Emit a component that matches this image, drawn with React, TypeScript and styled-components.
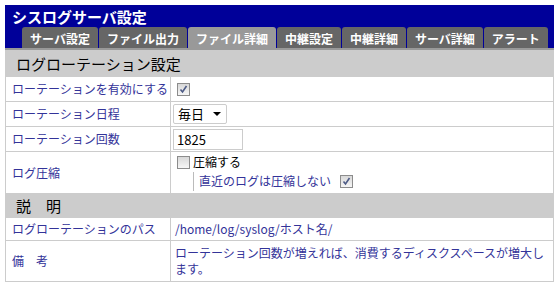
import React from 'react';
import styled, { createGlobalStyle } from 'styled-components';

const GlobalStyle = createGlobalStyle`
  body {
    margin: 0;
    background: #fff;
    font-family: "Noto Sans CJK JP", "Noto Sans", sans-serif;
  }
`;

const tabs = ['サーバ設定', 'ファイル出力', 'ファイル詳細', '中継設定', '中継詳細', 'サーバ詳細', 'アラート'];
const activeTab = 'ファイル詳細';

const Page = styled.div`
  padding: 5px;
  width: 549px;
`;

const Header = styled.header`
  background: #000099;
  border-bottom: 2px solid #999;
  padding-top: 2px;
`;

const Title = styled.h1`
  margin: 0;
  padding-left: 7px;
  font-size: 15px;
  font-weight: bold;
  line-height: 19px;
  color: #fff;
`;

const TabBar = styled.nav`
  display: flex;
  gap: 1px;
  margin-top: 1px;
  padding-left: 17px;
`;

const Tab = styled.div<{ $active?: boolean }>`
  height: 21px;
  padding: 0 8px;
  border-radius: 3px 3px 0 0;
  background: ${(p) => (p.$active ? '#999' : '#666')};
  color: #fff;
  font-size: 12px;
  font-weight: bold;
  line-height: 23px;
  white-space: nowrap;
`;

const Table = styled.table`
  width: 549px;
  border-collapse: collapse;
  table-layout: fixed;
`;

const SectionHead = styled.th<{ $h: number }>`
  height: ${(p) => p.$h}px;
  padding: 0 0 0 10px;
  background: #ccc;
  border: 1px solid #ccc;
  color: #000;
  font-size: 15px;
  font-weight: normal;
  line-height: 18px;
  text-align: left;
  letter-spacing: 0;
`;

const Label = styled.td<{ $h: number }>`
  height: ${(p) => p.$h}px;
  padding: 0 6px;
  border: 1px solid #ccc;
  color: #333399;
  font-size: 12px;
  line-height: 16px;
  vertical-align: middle;
  white-space: nowrap;
`;

const Value = styled.td`
  padding: 0 4px;
  border: 1px solid #ccc;
  color: #333399;
  font-size: 12px;
  line-height: 16px;
  vertical-align: middle;
`;

const CheckBox = styled.span`
  display: inline-flex;
  align-items: center;
  justify-content: center;
  box-sizing: border-box;
  width: 13px;
  height: 13px;
  border: 1px solid #8c8c8c;
  background: linear-gradient(#d8d8d8, #f6f6f6);
  vertical-align: middle;
`;

const Check = ({ checked }: { checked?: boolean }) => (
  <CheckBox>
    {checked && (
      <svg width="9" height="9" viewBox="0 0 9 9">
        <path d="M1.5 4.5 L3.5 7 L7.5 1" fill="none" stroke="#4d5b86" strokeWidth="1.6" />
      </svg>
    )}
  </CheckBox>
);

const CheckLine = styled.div`
  display: flex;
  align-items: center;
  gap: 3px;
  margin-left: 2px;
  color: #000;
`;

const SubOption = styled.div`
  display: flex;
  align-items: center;
  gap: 9px;
  margin: 2px 0 0 18px;
  padding: 1px 0 2px 5px;
  border-left: 1px solid #bbb;
`;

const Select = styled.div`
  display: flex;
  align-items: center;
  justify-content: space-between;
  box-sizing: border-box;
  width: 54px;
  height: 20px;
  margin-left: -2px;
  padding: 0 5px 0 4px;
  border: 1px solid #ccc;
  border-radius: 2px;
  color: #000;
  font-size: 13px;
`;

const Caret = styled.span`
  width: 0;
  height: 0;
  border-left: 4px solid transparent;
  border-right: 4px solid transparent;
  border-top: 4px solid #000;
`;

const NumberInput = styled.input`
  box-sizing: border-box;
  width: 70px;
  height: 21px;
  margin-left: -2px;
  padding: 0 3px;
  border: 1px solid #ccc;
  color: #000;
  font-family: inherit;
  font-size: 13px;
  outline: none;
`;

export default function App() {
  return (
    <Page>
      <GlobalStyle />
      <Header>
        <Title>シスログサーバ設定</Title>
        <TabBar>
          {tabs.map((t) => (
            <Tab key={t} $active={t === activeTab}>
              {t}
            </Tab>
          ))}
        </TabBar>
      </Header>
      <Table>
        <colgroup>
          <col style={{ width: 165 }} />
          <col />
        </colgroup>
        <tbody>
          <tr>
            <SectionHead colSpan={2} $h={25}>ログローテーション設定</SectionHead>
          </tr>
          <tr>
            <Label $h={24}>ローテーションを有効にする</Label>
            <Value>
              <CheckLine>
                <Check checked />
              </CheckLine>
            </Value>
          </tr>
          <tr>
            <Label $h={24}>ローテーション日程</Label>
            <Value>
              <Select>
                毎日
                <Caret />
              </Select>
            </Value>
          </tr>
          <tr>
            <Label $h={24}>ローテーション回数</Label>
            <Value>
              <NumberInput defaultValue="1825" />
            </Value>
          </tr>
          <tr>
            <Label $h={41}>ログ圧縮</Label>
            <Value>
              <CheckLine>
                <Check />
                圧縮する
              </CheckLine>
              <SubOption>
                直近のログは圧縮しない
                <Check checked />
              </SubOption>
            </Value>
          </tr>
          <tr>
            <SectionHead colSpan={2} $h={23}>説　明</SectionHead>
          </tr>
          <tr>
            <Label $h={22}>ログローテーションのパス</Label>
            <Value>/home/log/syslog/ホスト名/</Value>
          </tr>
          <tr>
            <Label $h={40}>備　考</Label>
            <Value>ローテーション回数が増えれば、消費するディスクスペースが増大します。</Value>
          </tr>
        </tbody>
      </Table>
    </Page>
  );
}
